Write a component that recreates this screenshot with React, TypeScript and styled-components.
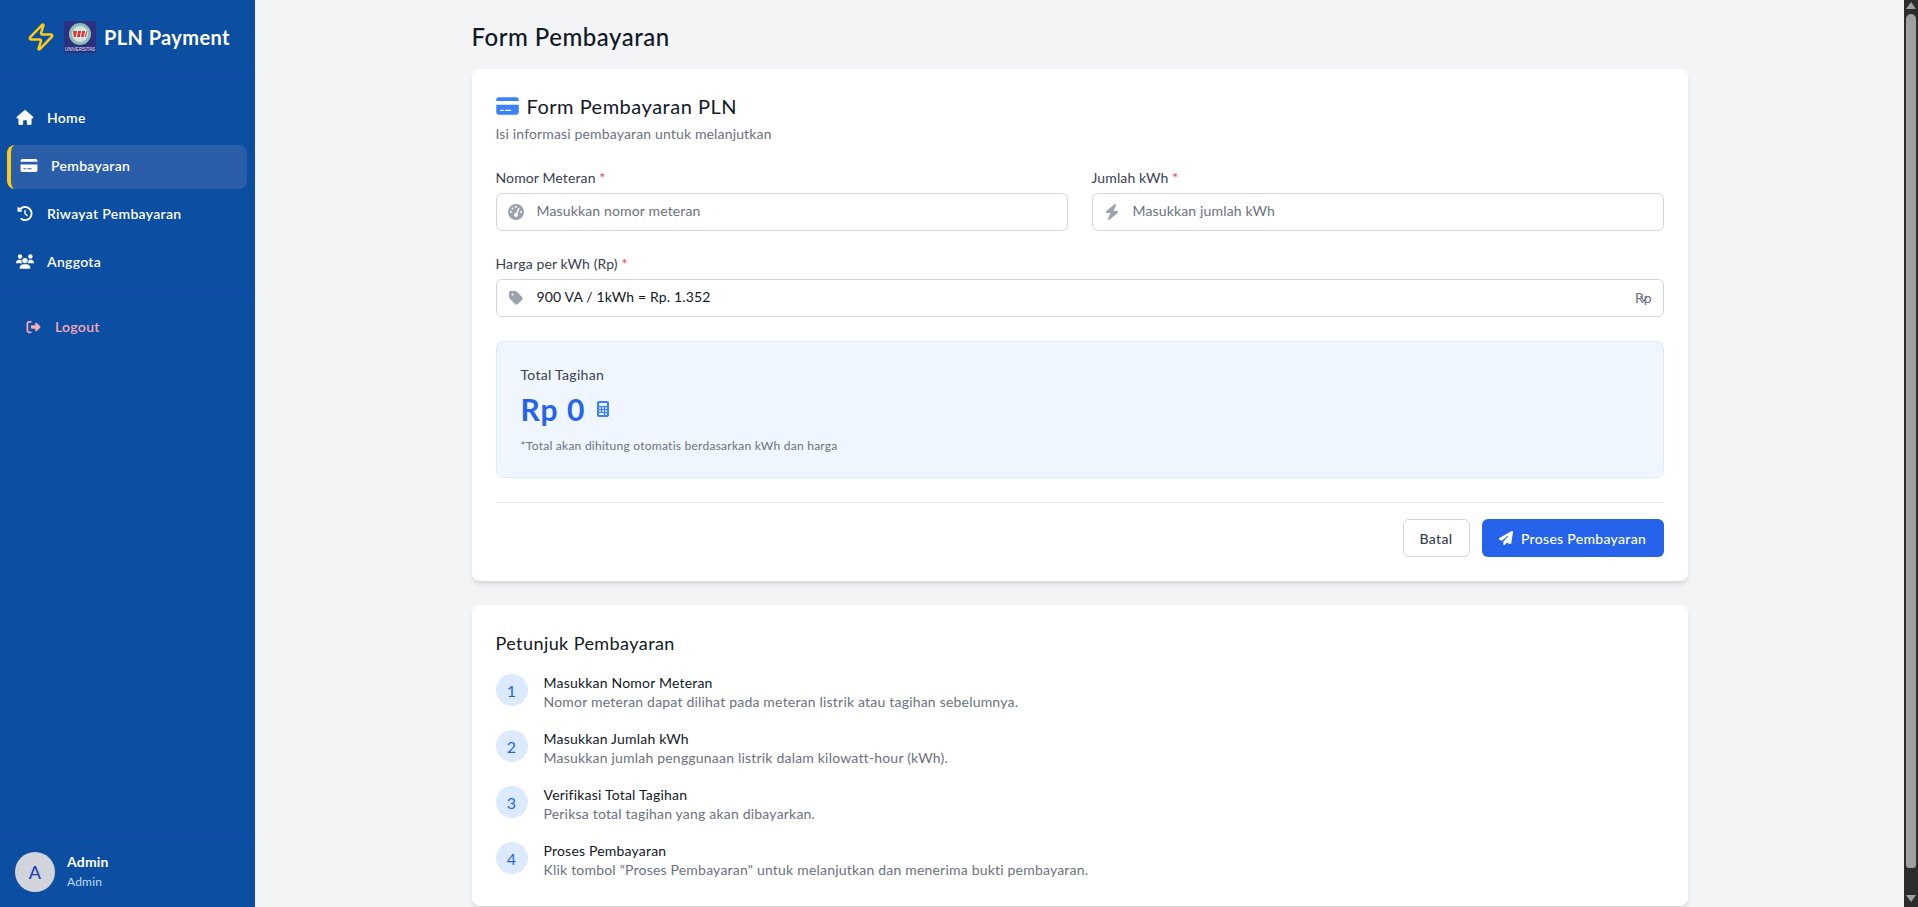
import React from 'react'
import styled, { createGlobalStyle } from 'styled-components'
import { Zap } from 'lucide-react'
import {
  FaBolt,
  FaCalculator,
  FaClockRotateLeft,
  FaCreditCard,
  FaGaugeHigh,
  FaHouse,
  FaPaperPlane,
  FaRightFromBracket,
  FaTag,
  FaUsers,
} from 'react-icons/fa6'

const GlobalStyle = createGlobalStyle`
  html, body { margin: 0; padding: 0; height: 100%; overflow: hidden; }
  body { font-family: Lato, "Open Sans", "Liberation Sans", sans-serif; background: #f3f4f6; color: #111827; }
  * { box-sizing: border-box; }
`

const Shell = styled.div`
  display: flex;
  height: 907px;
  overflow: hidden;
`

const Sidebar = styled.aside`
  width: 255px;
  flex: none;
  display: flex;
  flex-direction: column;
  background: #0b4ea2;
  color: #fff;
`

const Brand = styled.div`
  height: 77px;
  display: flex;
  align-items: center;
  padding: 0 0 3px 26px;
  border-bottom: 1px solid #1e40af;
`

const BrandName = styled.span`
  margin-left: 8px;
  font-size: 20px;
  font-weight: 700;
  letter-spacing: 0.4px;
  white-space: nowrap;
`

const Nav = styled.nav`
  padding: 20px 8px 5px;
  display: flex;
  flex-direction: column;
  gap: 4px;
  border-bottom: 1px solid #1e40af;
`

const NavItem = styled.a<{ $active?: boolean }>`
  height: 44px;
  display: flex;
  align-items: center;
  gap: 13px;
  border-radius: 8px;
  font-size: 14px;
  font-weight: 600;
  letter-spacing: 0.3px;
  color: #fff;
  padding-bottom: 3px;
  padding-left: ${(p) => (p.$active ? '9px' : '8px')};
  margin-left: ${(p) => (p.$active ? '-1px' : '0')};
  background: ${(p) => (p.$active ? '#2a5ea9' : 'transparent')};
  border-left: ${(p) => (p.$active ? '4px solid #facc15' : '0')};
  svg { width: 18px; height: 15px; flex: none; }
`

const Logout = styled.a`
  height: 44px;
  margin: 15px 8px 0;
  padding: 0 0 3px 18px;
  display: flex;
  align-items: center;
  gap: 14px;
  font-size: 14px;
  font-weight: 600;
  letter-spacing: 0.3px;
  color: #f9a8b4;
  svg { width: 15px; height: 14px; flex: none; }
`

const UserBox = styled.div`
  margin-top: auto;
  height: 71px;
  padding: 15px 15px 0;
  display: flex;
  gap: 12px;
  border-top: 1px solid #1e40af;
`

const Avatar = styled.div`
  width: 40px;
  height: 40px;
  border-radius: 50%;
  background: #d1d5db;
  color: #1e40af;
  display: flex;
  align-items: center;
  justify-content: center;
  font-size: 18px;
  font-weight: 500;
`

const UserName = styled.div`
  font-size: 14px;
  font-weight: 700;
  line-height: 20px;
  letter-spacing: 0.2px;
`

const UserRole = styled.div`
  font-size: 12px;
  line-height: 16px;
  margin-top: 2px;
  color: #bfdbfe;
  letter-spacing: 0.2px;
`

const Main = styled.main`
  flex: 1;
  min-width: 0;
  height: 907px;
  overflow: hidden;
`

const Content = styled.div`
  max-width: 1280px;
  margin: 0 auto;
  padding: 21px 32px 0;
`

const PageTitle = styled.h1`
  margin: 0 0 16px;
  font-size: 24px;
  line-height: 32px;
  font-weight: 500;
  letter-spacing: 0.5px;
`

const Card = styled.section`
  background: #fff;
  border-radius: 8px;
  padding: 24px;
  box-shadow: 0 4px 6px -1px rgba(0, 0, 0, 0.1), 0 2px 4px -1px rgba(0, 0, 0, 0.06);
  & + & { margin-top: 24px; }
`

const CardHeading = styled.h2`
  margin: -1px 0 0;
  display: flex;
  align-items: center;
  gap: 8px;
  font-size: 20px;
  line-height: 28px;
  font-weight: 400;
  letter-spacing: 0.5px;
  svg { width: 23px; height: 20px; color: #3b82f6; }
`

const CardHint = styled.p`
  margin: 4px 0 25px;
  font-size: 14px;
  line-height: 20px;
  color: #6b7280;
  letter-spacing: 0.15px;
`

const FieldGrid = styled.div`
  display: grid;
  grid-template-columns: 1fr 1fr;
  gap: 24px;
`

const Field = styled.div<{ $wide?: boolean }>`
  grid-column: ${(p) => (p.$wide ? '1 / -1' : 'auto')};
`

const Label = styled.label`
  display: block;
  margin: -1px 0 5px;
  font-size: 14px;
  line-height: 20px;
  font-weight: 400;
  color: #374151;
  letter-spacing: 0.12px;
  b { color: #ef4444; font-weight: 500; }
`

const InputWrap = styled.div`
  position: relative;
  height: 38px;
`

const InputIcon = styled.span`
  position: absolute;
  left: 12px;
  top: 0;
  bottom: 0;
  display: flex;
  align-items: center;
  color: #9ca3af;
  svg { width: 16px; height: 16px; }
`

const Suffix = styled.span`
  position: absolute;
  right: 12px;
  top: 0;
  bottom: 2px;
  display: flex;
  align-items: center;
  font-size: 14px;
  color: #6b7280;
`

const SelectArrow = styled.svg`
  position: absolute;
  right: 16px;
  top: 16px;
  width: 8px;
  height: 7px;
  fill: none;
  stroke: #6b7280;
  stroke-width: 1.2;
`

const Input = styled.input`
  width: 100%;
  height: 100%;
  padding: 0 40px 3px;
  border: 1px solid #d1d5db;
  border-radius: 6px;
  background: #fff;
  font: inherit;
  font-size: 14px;
  letter-spacing: 0.15px;
  color: #111827;
  outline: none;
  &::placeholder { color: #6b7280; opacity: 1; }
`

const TotalBox = styled.div`
  margin-top: 24px;
  height: 137px;
  padding: 24px;
  background: #eff6ff;
  border: 1px solid #dbeafe;
  border-radius: 8px;
`

const TotalLabel = styled.div`
  margin-top: -1px;
  font-size: 14px;
  line-height: 20px;
  font-weight: 400;
  color: #374151;
  letter-spacing: 0.3px;
`

const TotalValue = styled.div`
  margin-top: 6px;
  display: flex;
  align-items: center;
  gap: 12px;
  font-size: 30px;
  line-height: 36px;
  font-weight: 700;
  color: #2563eb;
  letter-spacing: 1px;
  svg { width: 12px; height: 16px; color: #3b82f6; }
`

const TotalNote = styled.div`
  margin-top: 11px;
  font-size: 12px;
  line-height: 16px;
  color: #6b7280;
  letter-spacing: 0.25px;
`

const Actions = styled.div`
  margin-top: 24px;
  padding-top: 16px;
  border-top: 1px solid #e5e7eb;
  display: flex;
  justify-content: flex-end;
  gap: 12px;
`

const GhostButton = styled.button`
  height: 38px;
  width: 67px;
  padding: 0;
  background: #fff;
  border: 1px solid #d1d5db;
  border-radius: 6px;
  font: inherit;
  font-size: 14px;
  font-weight: 500;
  letter-spacing: 0.3px;
  color: #374151;
`

const PrimaryButton = styled.button`
  height: 38px;
  width: 182px;
  padding: 0;
  display: flex;
  align-items: center;
  justify-content: center;
  gap: 8px;
  background: #2563eb;
  border: 0;
  border-radius: 6px;
  font: inherit;
  font-size: 14px;
  font-weight: 500;
  letter-spacing: 0.3px;
  color: #fff;
  svg { width: 14px; height: 14px; }
`

const StepsTitle = styled.h3`
  margin: 0 0 17px;
  font-size: 18px;
  line-height: 28px;
  font-weight: 400;
  letter-spacing: 0.42px;
`

const Steps = styled.ol`
  margin: 0;
  padding: 0;
  list-style: none;
  display: flex;
  flex-direction: column;
  gap: 16px;
`

const Step = styled.li`
  display: flex;
  gap: 16px;
  min-height: 40px;
`

const StepNumber = styled.span`
  flex: none;
  width: 32px;
  height: 32px;
  border-radius: 50%;
  background: #dbeafe;
  color: #2563eb;
  display: flex;
  align-items: center;
  justify-content: center;
  font-size: 16px;
`

const StepTitle = styled.div`
  margin-top: -1px;
  font-size: 14px;
  line-height: 20px;
  font-weight: 400;
  letter-spacing: 0.2px;
`

const StepText = styled.div`
  margin-top: -1px;
  font-size: 14px;
  line-height: 20px;
  color: #6b7280;
  letter-spacing: 0.2px;
`

const Scrollbar = styled.div`
  width: 14px;
  flex: none;
  height: 907px;
  background: #2c2c2c;
  display: flex;
  flex-direction: column;
  align-items: center;
  padding-top: 2px;
`

const ScrollArrow = styled.svg`
  width: 10px;
  height: 7px;
  flex: none;
  fill: #a0a0a0;
`

const ScrollThumb = styled.div`
  width: 10px;
  height: 854px;
  margin-top: 5px;
  margin-bottom: 27px;
  background: #9f9f9f;
  border-radius: 5px 5px 3px 3px;
`

const steps = [
  { title: 'Masukkan Nomor Meteran', text: 'Nomor meteran dapat dilihat pada meteran listrik atau tagihan sebelumnya.' },
  { title: 'Masukkan Jumlah kWh', text: 'Masukkan jumlah penggunaan listrik dalam kilowatt-hour (kWh).' },
  { title: 'Verifikasi Total Tagihan', text: 'Periksa total tagihan yang akan dibayarkan.' },
  { title: 'Proses Pembayaran', text: 'Klik tombol "Proses Pembayaran" untuk melanjutkan dan menerima bukti pembayaran.' },
]

function UniversityLogo() {
  return (
    <svg width="32" height="32" viewBox="0 0 32 32" style={{ marginLeft: 8, flex: 'none' }}>
      <rect width="32" height="32" fill="#2b3180" />
      <circle cx="16" cy="13" r="11" fill="#8fbdb5" />
      <circle cx="16" cy="13" r="8" fill="#cfe3de" />
      <path d="M9 10 L23 10 L22 16 L10 16 Z" fill="#d8383c" />
      <path d="M14 8 L12 18 M18 8 L16 18 M22 9 L20 17" stroke="#f7f7f7" strokeWidth="1" />
      <text x="16" y="30" textAnchor="middle" fontSize="4.6" fill="#e8e8f0" fontFamily="Liberation Sans">UNIVERSITAS</text>
    </svg>
  )
}

export default function App() {
  return (
    <Shell>
      <GlobalStyle />
      <Sidebar>
        <Brand>
          <Zap size={30} color="#facc15" strokeWidth={2} style={{ flex: 'none' }} />
          <UniversityLogo />
          <BrandName>PLN Payment</BrandName>
        </Brand>
        <Nav>
          <NavItem><FaHouse />Home</NavItem>
          <NavItem $active><FaCreditCard />Pembayaran</NavItem>
          <NavItem><FaClockRotateLeft />Riwayat Pembayaran</NavItem>
          <NavItem><FaUsers />Anggota</NavItem>
        </Nav>
        <Logout><FaRightFromBracket />Logout</Logout>
        <UserBox>
          <Avatar>A</Avatar>
          <div>
            <UserName>Admin</UserName>
            <UserRole>Admin</UserRole>
          </div>
        </UserBox>
      </Sidebar>
      <Main>
        <Content>
          <PageTitle>Form Pembayaran</PageTitle>
          <Card>
            <CardHeading><FaCreditCard />Form Pembayaran PLN</CardHeading>
            <CardHint>Isi informasi pembayaran untuk melanjutkan</CardHint>
            <FieldGrid>
              <Field>
                <Label>Nomor Meteran <b>*</b></Label>
                <InputWrap>
                  <InputIcon><FaGaugeHigh /></InputIcon>
                  <Input placeholder="Masukkan nomor meteran" />
                </InputWrap>
              </Field>
              <Field>
                <Label>Jumlah kWh <b>*</b></Label>
                <InputWrap>
                  <InputIcon><FaBolt /></InputIcon>
                  <Input placeholder="Masukkan jumlah kWh" />
                </InputWrap>
              </Field>
              <Field $wide>
                <Label>Harga per kWh (Rp) <b>*</b></Label>
                <InputWrap>
                  <InputIcon><FaTag /></InputIcon>
                  <Input readOnly value="900 VA / 1kWh = Rp. 1.352" />
                  <Suffix>Rp</Suffix>
                  <SelectArrow viewBox="0 0 8 7"><path d="M0.5 1 L4 6 L7.5 1" /></SelectArrow>
                </InputWrap>
              </Field>
            </FieldGrid>
            <TotalBox>
              <TotalLabel>Total Tagihan</TotalLabel>
              <TotalValue>Rp 0 <FaCalculator /></TotalValue>
              <TotalNote>*Total akan dihitung otomatis berdasarkan kWh dan harga</TotalNote>
            </TotalBox>
            <Actions>
              <GhostButton>Batal</GhostButton>
              <PrimaryButton><FaPaperPlane />Proses Pembayaran</PrimaryButton>
            </Actions>
          </Card>
          <Card>
            <StepsTitle>Petunjuk Pembayaran</StepsTitle>
            <Steps>
              {steps.map((step, i) => (
                <Step key={step.title}>
                  <StepNumber>{i + 1}</StepNumber>
                  <div>
                    <StepTitle>{step.title}</StepTitle>
                    <StepText>{step.text}</StepText>
                  </div>
                </Step>
              ))}
            </Steps>
          </Card>
        </Content>
      </Main>
      <Scrollbar>
        <ScrollArrow viewBox="0 0 10 7"><path d="M5 0 L10 7 L0 7 Z" /></ScrollArrow>
        <ScrollThumb />
        <ScrollArrow viewBox="0 0 10 7"><path d="M0 0 L10 0 L5 7 Z" /></ScrollArrow>
      </Scrollbar>
    </Shell>
  )
}
